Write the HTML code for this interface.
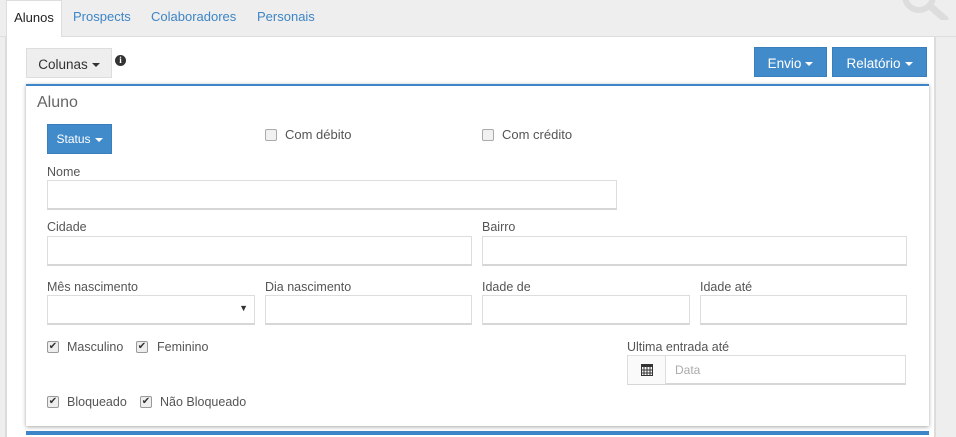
<!DOCTYPE html>
<html><head><meta charset="utf-8"><style>
*{box-sizing:border-box;margin:0;padding:0}
body{width:956px;height:434px;background:#eeeeee;font-family:"Liberation Sans",sans-serif;font-size:12px;color:#555;position:relative;overflow:hidden}
.a{position:absolute}
.tab{position:absolute;top:0;height:36px;line-height:34px;font-size:13px;color:#3d85c6}
.inp{position:absolute;height:30px;border:1px solid #ddd;border-bottom:2px solid #d6d6d6;background:#fff}
.lbl{position:absolute;font-size:12.5px;color:#555}
.btn{position:absolute;background:#428bca;border:1px solid #3a7fbd;color:#fff;font-size:13.5px;text-align:center}
.caret{display:inline-block;width:0;height:0;border-left:4px solid transparent;border-right:4px solid transparent;border-top:4px solid currentColor;vertical-align:middle;margin-left:4px}
.cb{position:absolute;width:12px;height:12px;border:1px solid #aaa;border-radius:2px;background:#f1f1f1}
.ck{position:absolute;width:12px;height:12px;border:1px solid #999;border-radius:2px;background:#eee;font-size:10px;line-height:10px;text-align:center;color:#333}
</style></head><body>
<div class="a" style="left:0;top:36px;width:956px;height:1px;background:#ddd"></div>
<div class="tab" style="left:6px;width:56px;background:#fff;border:1px solid #ddd;border-bottom:none;height:37px;color:#222;text-align:center">Alunos</div>
<div class="tab" style="left:73px">Prospects</div>
<div class="tab" style="left:151px">Colaboradores</div>
<div class="tab" style="left:257px">Personais</div>
<svg class="a" style="left:895px;top:-14px" width="60" height="34"><circle cx="24" cy="10" r="14" fill="none" stroke="#ddd" stroke-width="6"/><line x1="35" y1="20" x2="50" y2="33" stroke="#ddd" stroke-width="7" stroke-linecap="round"/></svg>
<div class="a" style="left:5px;top:37px;width:931px;height:400px;background:#fff;border-left:2px solid #dcdcdc;border-right:2px solid #dcdcdc"></div>
<div class="a" style="left:26px;top:48px;width:86px;height:30px;background:#eee;border:1px solid #ddd;color:#333;font-size:13.5px;line-height:32px;text-align:center">Colunas<span class="caret" style="color:#333"></span></div>
<div class="a" style="left:115px;top:55px;width:11px;height:11px;border-radius:50%;background:#333;color:#fff;font-size:9px;line-height:11px;text-align:center;font-weight:bold;font-family:'Liberation Serif',serif">i</div>
<div class="btn" style="left:754px;top:47px;width:73px;height:30px;line-height:32px">Envio<span class="caret"></span></div>
<div class="btn" style="left:832px;top:47px;width:95px;height:30px;line-height:32px">Relatório<span class="caret"></span></div>
<div class="a" style="left:26px;top:84px;width:903px;height:342px;background:#fff;border-top:2px solid #3d85c6;box-shadow:0 1px 4px rgba(0,0,0,.35)"></div>
<div class="a" style="left:37px;top:94px;font-size:16px;color:#666">Aluno</div>
<div class="btn" style="left:47px;top:124px;width:65px;height:30px;line-height:28px;font-size:12px">Status<span class="caret"></span></div>
<div class="cb" style="left:265px;top:129px"></div><div class="lbl" style="left:285px;top:127px;font-size:13px">Com débito</div>
<div class="cb" style="left:482px;top:129px"></div><div class="lbl" style="left:502px;top:127px;font-size:13px">Com crédito</div>
<div class="lbl" style="left:47px;top:165px">Nome</div>
<div class="inp" style="left:47px;top:180px;width:570px"></div>
<div class="lbl" style="left:47px;top:220px">Cidade</div>
<div class="inp" style="left:47px;top:236px;width:425px"></div>
<div class="lbl" style="left:482px;top:220px">Bairro</div>
<div class="inp" style="left:482px;top:236px;width:425px"></div>
<div class="lbl" style="left:47px;top:280px">Mês nascimento</div>
<div class="inp" style="left:47px;top:295px;width:208px"><span class="a" style="right:6px;top:7px;font-size:9px;color:#333">▼</span></div>
<div class="lbl" style="left:265px;top:280px">Dia nascimento</div>
<div class="inp" style="left:265px;top:295px;width:207px"></div>
<div class="lbl" style="left:482px;top:280px">Idade de</div>
<div class="inp" style="left:482px;top:295px;width:208px"></div>
<div class="lbl" style="left:700px;top:280px">Idade até</div>
<div class="inp" style="left:700px;top:295px;width:207px"></div>
<div class="ck" style="left:47px;top:341px">✔</div><div class="lbl" style="left:67px;top:340px">Masculino</div>
<div class="ck" style="left:136px;top:341px">✔</div><div class="lbl" style="left:157px;top:340px">Feminino</div>
<div class="lbl" style="left:627px;top:340px">Ultima entrada até</div>
<div class="inp" style="left:627px;top:355px;width:279px"><div class="a" style="left:0;top:0;width:38px;height:28px;border-right:1px solid #ddd;background:#fafafa"></div>
<svg class="a" style="left:13px;top:7px" width="12" height="13"><rect x="0.5" y="1.5" width="11" height="11" fill="none" stroke="#333"/><rect x="0" y="1" width="12" height="3" fill="#333"/><path d="M0 7h12M0 10h12M3 4v9M6 4v9M9 4v9" stroke="#333" stroke-width="1"/></svg>
<span class="a" style="left:47px;top:7px;color:#aaa">Data</span></div>
<div class="ck" style="left:47px;top:396px">✔</div><div class="lbl" style="left:67px;top:395px">Bloqueado</div>
<div class="ck" style="left:140px;top:396px">✔</div><div class="lbl" style="left:160px;top:395px">Não Bloqueado</div>
<div class="a" style="left:26px;top:431px;width:903px;height:4px;background:#3d85c6"></div>
</body></html>
